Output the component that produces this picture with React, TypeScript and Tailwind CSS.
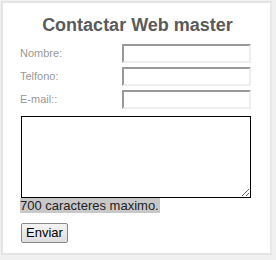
import React from "react";

const fieldLabels = ["Nombre:", "Telfono:", "E-mail::"];

export default function App() {
  return (
    <div className="w-[276px] h-[260px] bg-[#f0f0f0] pt-[1px] pl-[1px] font-['Liberation_Sans',Arial,sans-serif]">
      <div className="w-[271px] h-[254px] bg-white border-2 border-[#e4e4e4] border-r-[#e8e8e8] pl-[17px] pt-[11px]">
        {/* Title */}
        <h2 className="text-[18px] leading-[22px] font-bold text-[#5a5a5a] text-center pr-[15px]">
          Contactar Web master
        </h2>

        {/* Fields */}
        <div className="mt-[8px] flex flex-col gap-[4px]">
          {fieldLabels.map((label) => (
            <div key={label} className="flex items-center h-[19px]">
              <span className="w-[102px] text-[11px] text-[#999]">{label}</span>
              <input
                type="text"
                className="w-[129px] h-[19px] bg-white border-2 border-t-[#999] border-l-[#999] border-b-[#eee] border-r-[#eee] outline-none"
              />
            </div>
          ))}
        </div>

        {/* Message */}
        <textarea className="block mt-[7px] ml-[1px] w-[230px] h-[82px] border border-black bg-white outline-none resize" />
        <div className="w-fit bg-[#c8c8c8] text-[13px] leading-[15px] text-[#222] pr-[1px]">
          700 caracteres maximo.
        </div>

        {/* Submit */}
        <div className="mt-[10px] ml-[1px] flex">
          <button className="h-[20px] px-[4px] text-[13px] leading-[16px] text-black bg-gradient-to-b from-[#f4f4f4] to-[#dedede] border border-[#8a8a8a] rounded-[2px]">
            Enviar
          </button>
        </div>
      </div>
    </div>
  );
}
